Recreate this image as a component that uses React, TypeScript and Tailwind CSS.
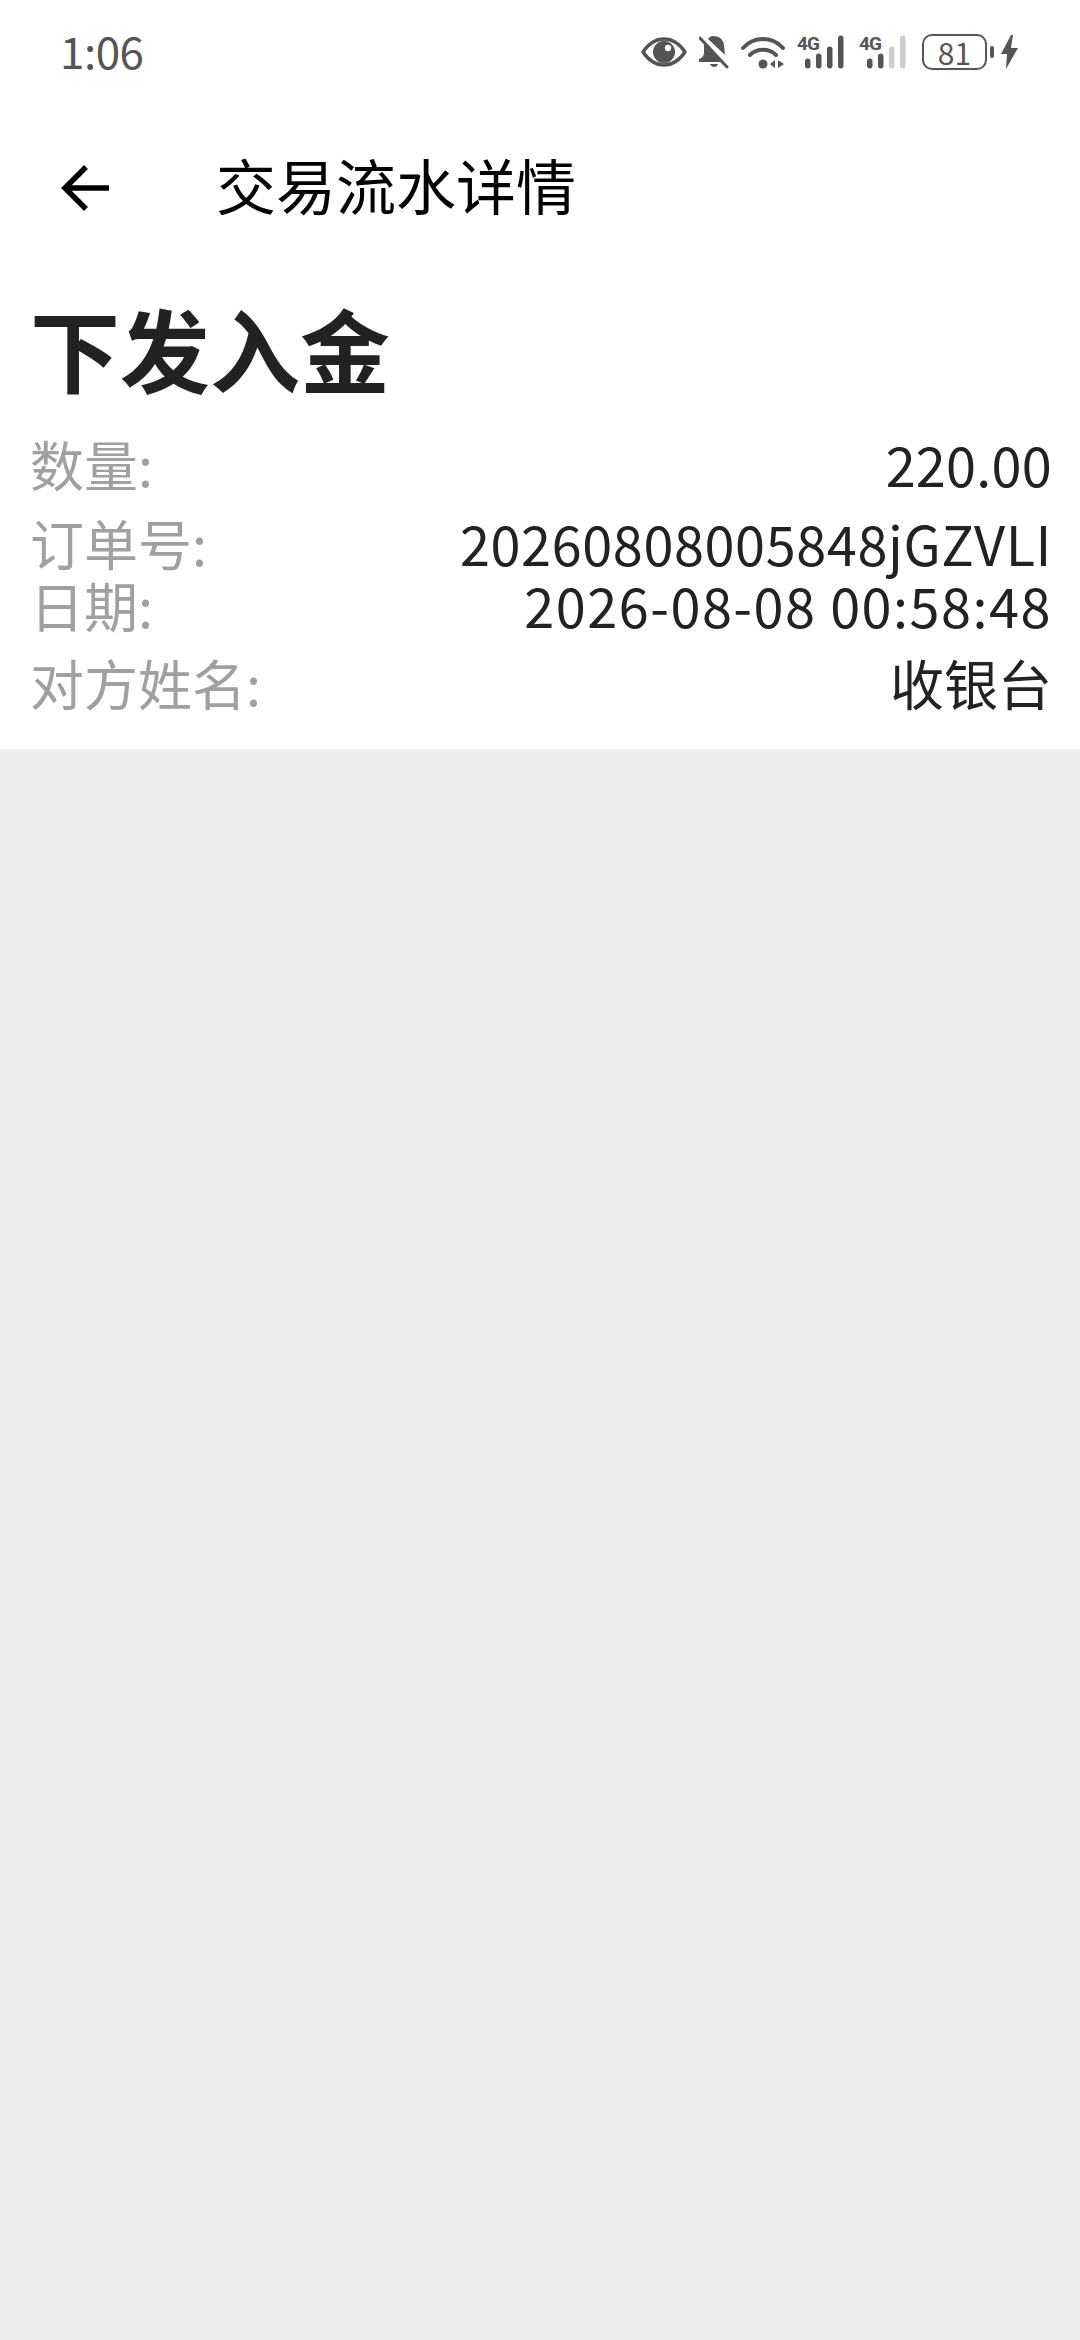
const cjk = "font-['Noto_Sans_CJK_SC','Noto_Sans',sans-serif]";

function EyeIcon() {
  return (
    <svg width="46" height="30" viewBox="0 0 46 30" fill="none">
      <path d="M2 15C8 6 15 2 23 2s15 4 21 13c-6 9-13 13-21 13S8 24 2 15Z" stroke="#555" strokeWidth="3.5" strokeLinejoin="round" />
      <circle cx="23" cy="15" r="11" fill="#555" />
      <circle cx="27" cy="11" r="3.2" fill="#fff" />
    </svg>
  );
}

function BellOffIcon() {
  return (
    <svg width="30" height="34" viewBox="0 0 30 34" fill="none">
      <path d="M14 1c6 0 10 3 11 9l1 10L9 4c1-2 3-3 5-3Z" fill="#555" />
      <path d="M5 8 24 27H0v-3c3-1 5-3 5-7V8Z" fill="#555" />
      <path d="M11 29h8c-1 4-7 4-8 0Z" fill="#555" />
      <path d="M1 3l27 29" stroke="#555" strokeWidth="3" strokeLinecap="round" />
    </svg>
  );
}

function WifiIcon() {
  return (
    <svg width="44" height="34" viewBox="0 0 44 34" fill="none">
      <path d="M2 13C13 1 31 1 42 13" stroke="#555" strokeWidth="4" strokeLinecap="round" />
      <path d="M9 20c7-7 19-7 26 0" stroke="#555" strokeWidth="4" strokeLinecap="round" />
      <circle cx="22" cy="29" r="4.500" fill="#555" />
      <path d="M34 25v8l-5-4ZM37 25v8l6-4Z" fill="#555" />
    </svg>
  );
}

function SignalIcon({ active }: { active: number }) {
  const heights = [10, 15, 22, 33];
  return (
    <svg className="overflow-visible" width="50" height="34" viewBox="0 0 50 34">
      <text x="0" y="15" fontFamily="Roboto, sans-serif" fontSize="19" fontWeight="700" fill="#555" letterSpacing="-1">4G</text>
      {heights.map((h, i) => (
        <rect key={i} x={8 + i * 11} y={33.500 - h} width="5.500" height={h} rx="2.700" fill={i < active ? "#555" : "#ccc"} />
      ))}
    </svg>
  );
}

function BoltIcon() {
  return (
    <svg width="17" height="34" viewBox="0 0 17 34">
      <path d="M10 0 0 19h6l-1 15L17 13h-7l2-13Z" fill="#555" />
    </svg>
  );
}

function StatusBar() {
  return (
    <div className="flex h-[104px] items-center justify-between pl-[60px] pr-[62px]">
      <span className={`${cjk} -mt-[5px] text-[44px] leading-none tracking-[-0.5px] text-[#555]`}>1:06</span>
      <div className="flex items-center">
        <EyeIcon />
        <div className="ml-[12px]"><BellOffIcon /></div>
        <div className="ml-[12px]"><WifiIcon /></div>
        <div className="ml-[12px]"><SignalIcon active={4} /></div>
        <div className="ml-[12px]"><SignalIcon active={2} /></div>
        <div className="ml-[13px] flex h-[36px] w-[65px] items-center justify-center rounded-[10px] border-[2.500px] border-[#555]">
          <span className={`${cjk} text-[30px] leading-none text-[#555]`}>81</span>
        </div>
        <div className="ml-[3px] h-[12px] w-[4px] rounded-sm bg-[#555]" />
        <div className="ml-[7px]"><BoltIcon /></div>
      </div>
    </div>
  );
}

function Row({ label, value, className, valueClass }: { label: string; value: string; className?: string; valueClass?: string }) {
  return (
    <div className={`flex items-center justify-between text-[54px] leading-[62px] ${className ?? ""}`}>
      <span className="text-[#a0a0a0]">{label}</span>
      <span className={`text-[#222] ${valueClass ?? ""}`}>{value}</span>
    </div>
  );
}

export default function App() {
  return (
    <div className={`${cjk} flex h-[2340px] w-[1080px] flex-col bg-[#eeeeee]`}>
      <div className="h-[749px] bg-white">
        <StatusBar />
        <div className="flex h-[160px] items-center">
          <svg className="ml-[60px] mt-[8px]" width="50" height="50" viewBox="0 0 50 50" fill="none">
            <path d="M49 25H6M26 4 5 25l21 21" stroke="#000" strokeWidth="5.500" />
          </svg>
          <h1 className="ml-[106px] text-[60px] leading-none text-black">交易流水详情</h1>
        </div>
        <div className="pl-[30px] pr-[28px]">
          <h2 className="mt-[33px] text-[90px] font-bold leading-[100px] text-[#222]">下发入金</h2>
          <Row label="数量:" value="220.00" className="mt-[36px]" valueClass="tracking-[0.25px]" />
          <Row label="订单号:" value="20260808005848jGZVLI" className="mt-[17px]" valueClass="tracking-[0.6px]" />
          <Row label="日期:" value="2026-08-08 00:58:48" valueClass="tracking-[1.5px]" />
          <Row label="对方姓名:" value="收银台" className="mt-[16px]" />
        </div>
      </div>
    </div>
  );
}
